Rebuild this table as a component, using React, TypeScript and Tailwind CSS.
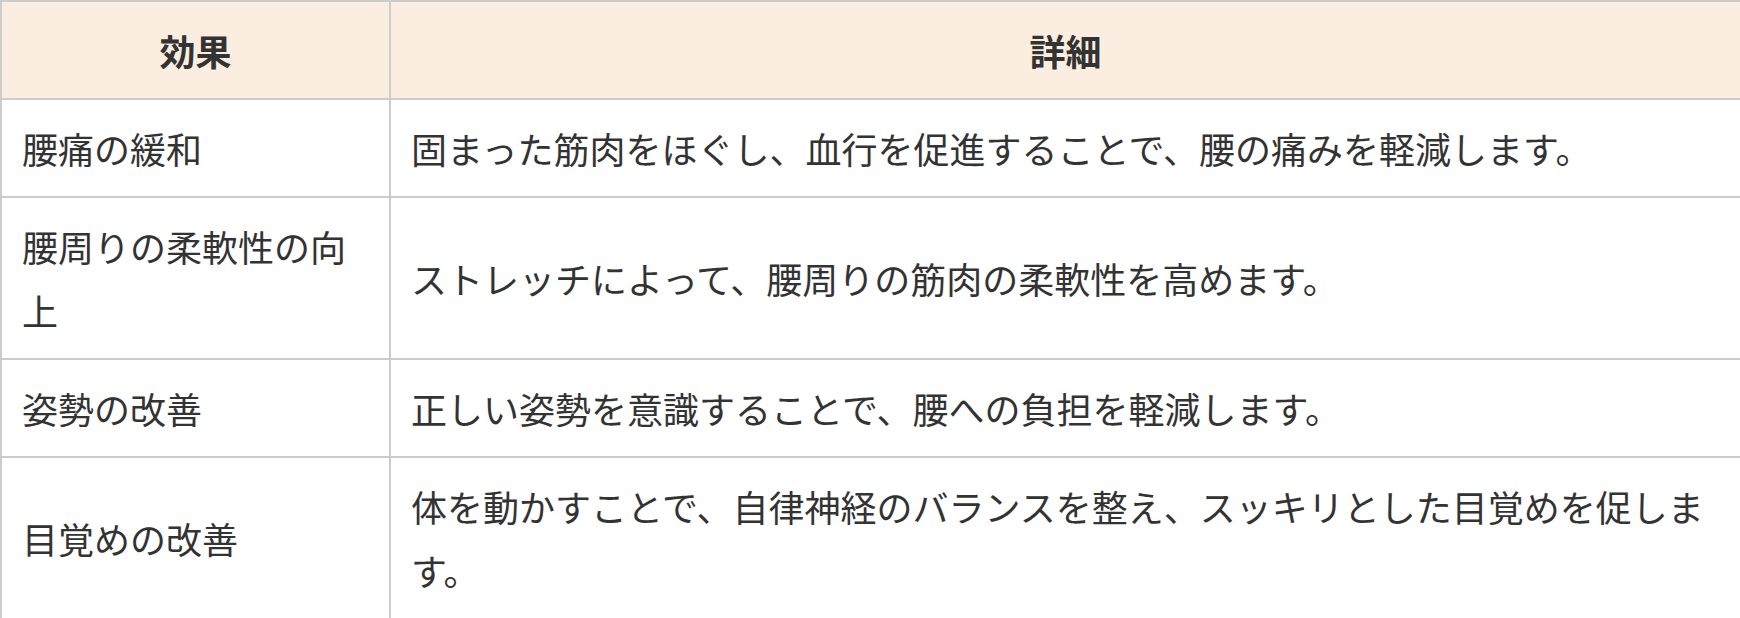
import React from "react";

const rows: [string, string][] = [
  ["腰痛の緩和", "固まった筋肉をほぐし、血行を促進することで、腰の痛みを軽減します。"],
  ["腰周りの柔軟性の向上", "ストレッチによって、腰周りの筋肉の柔軟性を高めます。"],
  ["姿勢の改善", "正しい姿勢を意識することで、腰への負担を軽減します。"],
  ["目覚めの改善", "体を動かすことで、自律神経のバランスを整え、スッキリとした目覚めを促します。"],
];

export default function App() {
  return (
    <div
      className="w-[1740px] h-[618px] overflow-hidden bg-white"
      style={{ fontFamily: '"Noto Sans CJK JP", "Noto Sans", sans-serif' }}
    >
      <div
        lang="ja"
        className="w-[1742px] grid grid-cols-[387px_1349px] gap-[2px] p-[2px] bg-[#cccccc] text-[36px] leading-[64px] text-[#333333]"
      >
        <div className="bg-[#fbeee0] px-[20px] py-[16px] text-center font-bold">効果</div>
        <div className="bg-[#fbeee0] px-[20px] py-[16px] text-center font-bold">詳細</div>
        {rows.map(([a, b]) => (
          <React.Fragment key={a}>
            <div className="bg-white px-[20px] py-[16px] flex items-center">
              <span>{a}</span>
            </div>
            <div className="bg-white px-[20px] py-[16px] flex items-center">
              <span>{b}</span>
            </div>
          </React.Fragment>
        ))}
      </div>
    </div>
  );
}
